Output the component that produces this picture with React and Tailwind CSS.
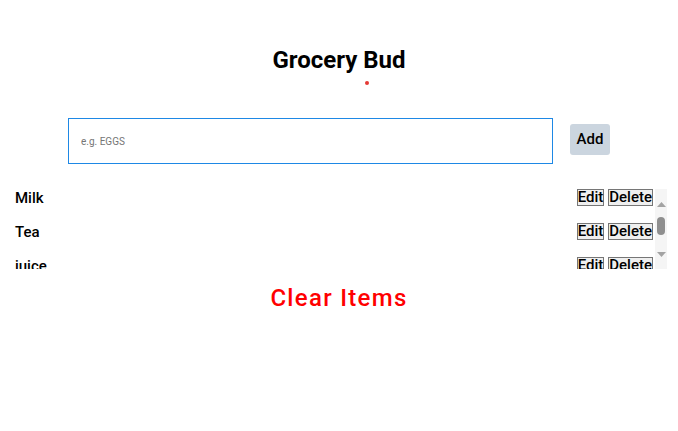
import { useState } from 'react';

const initialItems = ['Milk', 'Tea', 'juice', 'Bread', 'Butter', 'Rice', 'Apples'];

function Scrollbar() {
  return (
    <div className="flex w-[12px] shrink-0 flex-col items-center bg-[#f5f5f5]">
      <svg className="mt-[13px]" width="9" height="5" viewBox="0 0 9 5">
        <path d="M4.5 0 L9 5 L0 5 Z" fill="#a3a3a3" />
      </svg>
      <div className="mt-[10px] h-[18px] w-[8px] rounded-full bg-[#8f8f8f]" />
      <svg className="mt-[17px]" width="9" height="5" viewBox="0 0 9 5">
        <path d="M0 0 L9 0 L4.5 5 Z" fill="#a3a3a3" />
      </svg>
    </div>
  );
}

export default function App() {
  const [items, setItems] = useState(initialItems);
  const [value, setValue] = useState('');

  return (
    <div className="min-h-screen bg-white font-['Roboto',sans-serif] text-black">
      <h1 className="pt-[46px] text-center text-[24px] font-bold leading-[28px]">Grocery Bud</h1>
      <div className="mt-[7px] flex justify-center">
        <span className="ml-[55px] h-[4px] w-[4px] rounded-full bg-[#e53935]" />
      </div>

      <form
        className="mt-[33px] flex items-start justify-center gap-[17px]"
        onSubmit={(e) => {
          e.preventDefault();
          if (value.trim()) setItems([...items, value.trim()]);
          setValue('');
        }}
      >
        <input
          value={value}
          onChange={(e) => setValue(e.target.value)}
          placeholder="e.g. EGGS"
          className="h-[46px] w-[485px] border border-[#1e88e5] px-[12px] text-[10px] outline-none placeholder:text-[#757575]"
        />
        <button type="submit" className="mt-[6px] h-[31px] w-[40px] rounded-[3px] bg-[#cbd5df] text-[15px] font-medium">
          Add
        </button>
      </form>

      <div className="mt-[25px] flex h-[80px] w-[667px]">
        <ul className="flex-1 overflow-hidden">
          {items.map((item, i) => (
            <li key={i} className="flex h-[34px] items-start justify-between pl-[15px] pr-[2px]">
              <span className="text-[15px] font-medium leading-[18px]">{item}</span>
              <div className="flex gap-[4px]">
                <button className="border border-[#767676] bg-[#efefef] text-[15px] font-medium leading-[15px]">Edit</button>
                <button
                  className="border border-[#767676] bg-[#efefef] text-[15px] font-medium leading-[15px]"
                  onClick={() => setItems(items.filter((_, j) => j !== i))}
                >
                  Delete
                </button>
              </div>
            </li>
          ))}
        </ul>
        <Scrollbar />
      </div>

      <div className="mt-[15px] flex justify-center">
        <button className="text-[24px] font-medium leading-[28px] tracking-[1.3px] text-[#ff0000]" onClick={() => setItems([])}>
          Clear Items
        </button>
      </div>
    </div>
  );
}
